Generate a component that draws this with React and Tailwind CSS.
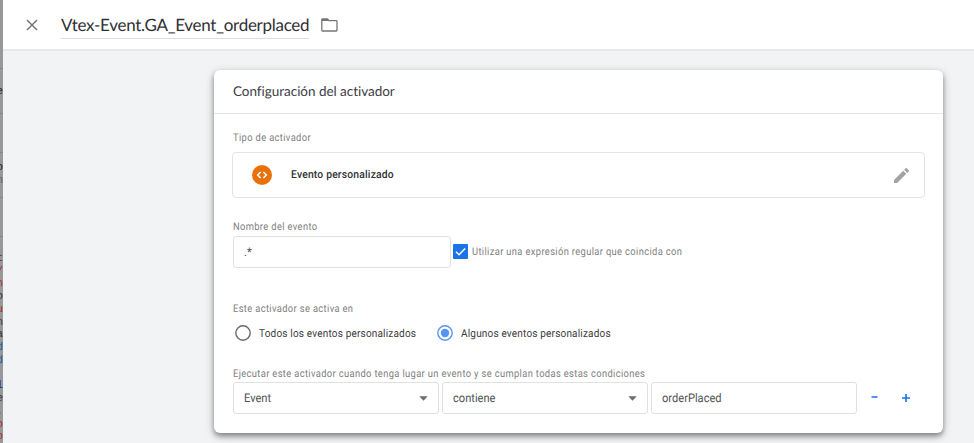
import React from 'react';

const fragments = [
  { t: 'e', top: 85, c: 'text-[#222]' },
  { t: 'o', top: 161, c: 'text-[#222]' },
  { t: 'n', top: 174, c: 'text-[#666]' },
  { t: 't', top: 252, c: 'text-[#70107c]' },
  { t: '/', top: 265, c: 'text-[#a02828]' },
  { t: 'n', top: 277, c: 'text-[#a83a3a]' },
  { t: 'o', top: 290, c: 'text-[#333]' },
  { t: 'u', top: 303, c: 'text-[#a82828]' },
  { t: 'n', top: 316, c: 'text-[#444]' },
  { t: 'a', top: 328, c: 'text-[#333]' },
  { t: 'd', top: 341, c: 'text-[#1f5f9c]' },
  { t: 'd', top: 354, c: 'text-[#1f5f9c]' },
  { t: 'l', top: 379, c: 'text-[#2222a8]' },
  { t: 'e', top: 392, c: 'text-[#333]' },
  { t: '.', top: 405, c: 'text-[#a82828]' },
  { t: 'o', top: 418, c: 'text-[#a82828]' },
  { t: 'o', top: 430, c: 'text-[#a82828]' },
];

const lines = [68, 113, 152, 197, 236];

function Backdrop() {
  return (
    <div className="relative w-[3px] shrink-0 overflow-hidden bg-[#989898]">
      {lines.map((y) => (
        <i key={y} className="absolute left-0 h-px w-full bg-[#858585]" style={{ top: y }} />
      ))}
      {fragments.map((f) => (
        <span
          key={f.top}
          className={'absolute right-0 font-["Liberation_Mono",monospace] text-[11px] leading-[14px] ' + f.c}
          style={{ top: f.top }}
        >
          {f.t}
        </span>
      ))}
    </div>
  );
}

function Label({ children, className = 'leading-[18px]' }) {
  return (
    <div className={'h-4 origin-left scale-x-[0.89] whitespace-nowrap text-[10.5px] tracking-[0.4px] text-[#808080] ' + className}>
      {children}
    </div>
  );
}

function Field({ children, select = false, className = 'w-[206px]' }) {
  return (
    <div
      className={
        'flex h-8 items-center justify-between rounded-[3px] border border-[#dfe0e2] pl-[10px] pr-[10px] text-[12px] text-[#505356] ' +
        className
      }
    >
      <span className="origin-left scale-x-[0.925]">{children}</span>
      {select && (
        <svg width="9" height="5" viewBox="0 0 9 5">
          <path d="M0.3 0.3h8.4L4.5 4.7z" fill="#6b6b6b" />
        </svg>
      )}
    </div>
  );
}

function Radio({ on = false }) {
  return (
    <svg width="16" height="16" viewBox="0 0 16 16" className="shrink-0">
      <circle cx="8" cy="8" r="7.2" fill="none" stroke={on ? '#5694f7' : '#6b6b6b'} strokeWidth="1.4" />
      {on && <circle cx="8" cy="8" r="4.2" fill="#5694f7" />}
    </svg>
  );
}

export default function App() {
  return (
    <div className="flex h-[443px] w-[974px] overflow-hidden bg-[#f1f3f4] font-[Roboto,sans-serif] [text-rendering:geometricPrecision]">
      <Backdrop />
      <div className="flex grow flex-col">
        <header className="flex h-[51px] shrink-0 border-b-2 border-[#e6e8ea] bg-white pl-[23px]">
          <svg width="12" height="12" viewBox="0 0 12 12" className="mt-[19px] shrink-0">
            <path d="M1 1l10 10M11 1L1 11" stroke="#6b6e70" strokeWidth="1.4" fill="none" />
          </svg>
          <h1 className="ml-[23px] mt-[13px] h-[26px] w-[248px] shrink-0 whitespace-nowrap border-b border-[#dddddd] font-[Lato,sans-serif] text-[17px] leading-[23px] tracking-[-0.28px] text-[#303134]">
            Vtex-Event.GA_Event_orderplaced
          </h1>
          <svg width="17" height="14" viewBox="0 0 17 14" className="ml-3 mt-[18px] shrink-0">
            <path d="M1.4 1h5l1.6 1.7h7.2c.5 0 .8.3.8.8v8.7c0 .5-.3.8-.8.8H1.6c-.5 0-.8-.3-.8-.8V1.8c0-.5.2-.8.6-.8z" fill="none" stroke="#757575" strokeWidth="1.3" />
            <path d="M1 1h5.5l1.6 2H1z" fill="#757575" />
          </svg>
        </header>

        <main className="pl-[211px] pt-[19px]">
          <section className="h-[363px] w-[729px] rounded-[6px] bg-white shadow-[0_3px_5px_rgba(0,0,0,0.32),0_3px_10px_rgba(0,0,0,0.24)]">
            <h2 className="h-11 whitespace-nowrap border-b border-[#e4e5e7] pl-[19px] font-[Lato,sans-serif] text-[13.5px] leading-[42px] tracking-[-0.03px] text-[#3c4043]">
              Configuración del activador
            </h2>
            <div className="flex flex-col pl-[19px] pt-[15px]">
              <Label className="leading-[17px]">Tipo de activador</Label>
              <div className="-ml-px mt-[7px] flex h-[46px] w-[693px] items-center rounded-[4px] border border-[#e2e3e5] pl-[19px] pr-[15px]">
                <svg width="20" height="20" viewBox="0 0 20 20">
                  <circle cx="10" cy="10" r="10" fill="#e8710a" />
                  <path d="M8.6 7L5.7 10l2.9 3M11.4 7l2.9 3-2.9 3" stroke="#fff" strokeWidth="1.5" fill="none" />
                </svg>
                <span className="ml-[19px] grow origin-left scale-x-[0.94] text-[11px] font-medium tracking-[0.2px] text-[#303134]">
                  Evento personalizado
                </span>
                <svg width="15" height="15" viewBox="3 3 18 18">
                  <path fill="#a3a3a3" d="M3 17.25V21h3.75L17.81 9.94l-3.75-3.75L3 17.25zM20.71 7.04a1 1 0 0 0 0-1.41l-2.34-2.34a1 1 0 0 0-1.41 0l-1.83 1.83 3.75 3.75 1.83-1.83z" />
                </svg>
              </div>

              <Label className="mt-5 leading-[18px]">Nombre del evento</Label>
              <div className="mt-[2px] flex items-center">
                <Field className="w-[218px]">.*</Field>
                <svg width="15" height="15" viewBox="0 0 15 15" className="mb-px ml-[2px]">
                  <rect width="15" height="15" rx="1" fill="#1a73e8" />
                  <path d="M3 7.8l3 3 6.2-6.4" fill="none" stroke="#fff" strokeWidth="1.5" />
                </svg>
                <Label className="ml-1 leading-4">Utilizar una expresión regular que coincida con</Label>
              </div>

              <Label className="mt-8 leading-[18px]">Este activador se activa en</Label>
              <div className="mt-[9px] flex h-4 items-center whitespace-nowrap pl-[2px] text-[11px] leading-[17px] tracking-[0.2px] text-[#3c3c3c]">
                <Radio />
                <span className="ml-2 w-[178px] origin-left scale-x-[0.91]">Todos los eventos personalizados</span>
                <Radio on />
                <span className="ml-2 origin-left scale-x-[0.91]">Algunos eventos personalizados</span>
              </div>

              <Label className="mt-6 leading-[17px]">Ejecutar este activador cuando tenga lugar un evento y se cumplan todas estas condiciones</Label>
              <div className="mt-px flex items-center gap-[3px]">
                <Field select>Event</Field>
                <Field select>contiene</Field>
                <Field>orderPlaced</Field>
                <svg width="40" height="10" viewBox="0 0 40 10" className="ml-[11px]">
                  <path d="M.5 4h6M31 5h8M35 1v8" stroke="#1a73e8" strokeWidth="1.6" fill="none" />
                </svg>
              </div>
            </div>
          </section>
        </main>
      </div>
    </div>
  );
}
